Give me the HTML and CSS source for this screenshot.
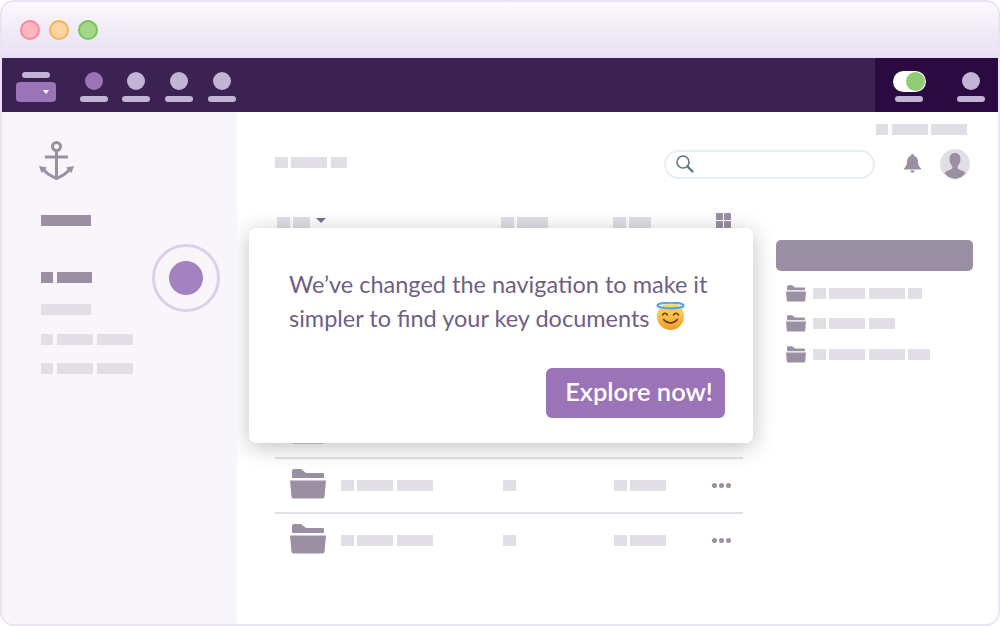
FILE: index.html
```html
<!DOCTYPE html>
<html lang="en">
<head>
    <meta charset="UTF-8">
    <meta name="viewport" content="width=device-width, initial-scale=1.0">
    <title>New navigation</title>
    <link rel="stylesheet" href="styles.css">
</head>
<body>
    <svg class="defs" width="0" height="0">
        <symbol id="folder" viewBox="0 0 36 30">
            <path d="M2 2a2 2 0 0 1 2-2h7l5 4h17a1 1 0 0 1 1 1v4H2z"/>
            <path d="M0 11.5h36l-1.5 16a2 2 0 0 1-2 2h-29a2 2 0 0 1-2-2z"/>
        </symbol>
    </svg>

    <div class="window">
        <div class="titlebar">
            <span class="light red"></span>
            <span class="light yellow"></span>
            <span class="light green"></span>
        </div>

        <nav class="navbar">
            <div class="brand">
                <span class="pill brand-pill"></span>
                <span class="brand-box"><span class="caret"></span></span>
            </div>
            <div class="nav-item active"><span class="dot"></span><span class="pill"></span></div>
            <div class="nav-item"><span class="dot"></span><span class="pill"></span></div>
            <div class="nav-item"><span class="dot"></span><span class="pill"></span></div>
            <div class="nav-item"><span class="dot"></span><span class="pill"></span></div>
            <div class="nav-right">
                <div class="nav-item"><span class="toggle"><span class="knob"></span></span><span class="pill"></span></div>
                <div class="nav-item"><span class="dot"></span><span class="pill"></span></div>
            </div>
        </nav>

        <div class="layout">
            <aside class="sidebar">
                <svg class="anchor" width="35" height="39" viewBox="0 0 35 39">
                    <circle cx="17.5" cy="5.5" r="4" fill="none" stroke="#9a8fa3" stroke-width="3"/>
                    <path d="M17.5 9v28M6 16h23M3.5 27Q7 33 17.5 37.5Q28 33 31.5 27" fill="none" stroke="#9a8fa3" stroke-width="3"/>
                    <path d="M0 25l8 1.500-5.500 5.500zM35 25l-8 1.500 5.500 5.500z" fill="#9a8fa3"/>
                </svg>
                <div class="sk-row side-title"><i class="sk dark w50"></i></div>
                <div class="sk-row side-active"><i class="sk dark w12"></i><i class="sk dark w35"></i></div>
                <div class="sk-row side-a"><i class="sk w50"></i></div>
                <div class="sk-row side-b"><i class="sk w12"></i><i class="sk w36"></i><i class="sk w36"></i></div>
                <div class="sk-row side-c"><i class="sk w12"></i><i class="sk w36"></i><i class="sk w36"></i></div>
                <div class="pulse"><span></span></div>
            </aside>

            <main class="main">
                <div class="sk-row top-links"><i class="sk w13"></i><i class="sk w36"></i><i class="sk w36"></i></div>

                <header class="header">
                    <div class="sk-row crumbs"><i class="sk w13"></i><i class="sk w36"></i><i class="sk w16"></i></div>
                    <div class="search">
                        <svg width="18" height="18" viewBox="0 0 18 18">
                            <circle cx="7" cy="7" r="6" fill="none" stroke="#5f7587" stroke-width="1.600"/>
                            <path d="M11.500 11.500l5 5" stroke="#5f7587" stroke-width="2.400" stroke-linecap="round"/>
                        </svg>
                    </div>
                    <svg class="bell" width="17" height="19" viewBox="0 0 17 19">
                        <path d="M8.500 0a1.500 1.500 0 0 1 1.500 1.700C12.500 2.400 14 4.500 14 7.500c0 3.500 1 5 3 7v1H0v-1c2-2 3-3.500 3-7 0-3 1.500-5.100 4-5.800A1.500 1.500 0 0 1 8.500 0zM6.300 16.500h4.400a2.200 2.200 0 0 1-4.400 0z" fill="#9a8fa3"/>
                    </svg>
                    <svg class="avatar" width="30" height="30" viewBox="0 0 30 30">
                        <circle cx="15" cy="15" r="15" fill="#e1dee6"/>
                        <path d="M15 4c3.500 0 5.500 2.500 5.500 6 0 3-1.200 5.500-2.800 7v2.500c1.500 1.500 6 2 7.800 4.500A15 15 0 0 1 15 30 15 15 0 0 1 4.500 24c1.800-2.500 6.300-3 7.800-4.500V17c-1.600-1.500-2.800-4-2.800-7 0-3.500 2-6 5.500-6z" fill="#9a8fa3"/>
                    </svg>
                </header>

                <div class="content">
                    <section class="table">
                        <div class="table-head">
                            <div class="sk-row"><i class="sk w13"></i><i class="sk w16"></i><span class="sort"></span></div>
                            <div class="sk-row"><i class="sk w13"></i><i class="sk w31"></i></div>
                            <div class="sk-row"><i class="sk w13"></i><i class="sk w22"></i></div>
                            <div class="grid-icon"><i></i><i></i><i></i><i></i></div>
                        </div>
                        <div class="table-row">
                            <div class="name"><svg class="folder"><use href="#folder"/></svg><div class="sk-row"><i class="sk w13"></i><i class="sk w36"></i><i class="sk w36"></i></div></div>
                            <div class="sk-row"><i class="sk w13"></i></div>
                            <div class="sk-row"><i class="sk w13"></i><i class="sk w36"></i></div>
                            <div class="more"><i></i><i></i><i></i></div>
                        </div>
                        <div class="table-row">
                            <div class="name"><svg class="folder"><use href="#folder"/></svg><div class="sk-row"><i class="sk w13"></i><i class="sk w36"></i><i class="sk w36"></i></div></div>
                            <div class="sk-row"><i class="sk w13"></i></div>
                            <div class="sk-row"><i class="sk w13"></i><i class="sk w36"></i></div>
                            <div class="more"><i></i><i></i><i></i></div>
                        </div>
                        <div class="table-row">
                            <div class="name"><svg class="folder"><use href="#folder"/></svg><div class="sk-row"><i class="sk w13"></i><i class="sk w36"></i><i class="sk w36"></i></div></div>
                            <div class="sk-row"><i class="sk w13"></i></div>
                            <div class="sk-row"><i class="sk w13"></i><i class="sk w36"></i></div>
                            <div class="more"><i></i><i></i><i></i></div>
                        </div>
                        <div class="table-row">
                            <div class="name"><svg class="folder"><use href="#folder"/></svg><div class="sk-row"><i class="sk w13"></i><i class="sk w36"></i><i class="sk w36"></i></div></div>
                            <div class="sk-row"><i class="sk w13"></i></div>
                            <div class="sk-row"><i class="sk w13"></i><i class="sk w36"></i></div>
                            <div class="more"><i></i><i></i><i></i></div>
                        </div>
                        <div class="table-row">
                            <div class="name"><svg class="folder"><use href="#folder"/></svg><div class="sk-row"><i class="sk w13"></i><i class="sk w36"></i><i class="sk w36"></i></div></div>
                            <div class="sk-row"><i class="sk w13"></i></div>
                            <div class="sk-row"><i class="sk w13"></i><i class="sk w36"></i></div>
                            <div class="more"><i></i><i></i><i></i></div>
                        </div>
                        <div class="table-row">
                            <div class="name"><svg class="folder"><use href="#folder"/></svg><div class="sk-row"><i class="sk w13"></i><i class="sk w36"></i><i class="sk w36"></i></div></div>
                            <div class="sk-row"><i class="sk w13"></i></div>
                            <div class="sk-row"><i class="sk w13"></i><i class="sk w36"></i></div>
                            <div class="more"><i></i><i></i><i></i></div>
                        </div>
                    </section>

                    <aside class="panel">
                        <div class="panel-btn"></div>
                        <div class="panel-row"><svg class="folder-sm"><use href="#folder"/></svg><div class="sk-row"><i class="sk w13"></i><i class="sk w36"></i><i class="sk w36"></i><i class="sk w14"></i></div></div>
                        <div class="panel-row"><svg class="folder-sm"><use href="#folder"/></svg><div class="sk-row"><i class="sk w13"></i><i class="sk w36"></i><i class="sk w26"></i></div></div>
                        <div class="panel-row"><svg class="folder-sm"><use href="#folder"/></svg><div class="sk-row"><i class="sk w13"></i><i class="sk w36"></i><i class="sk w36"></i><i class="sk w22"></i></div></div>
                    </aside>
                </div>

                <div class="modal">
                    <p>We’ve changed the navigation to make it<br>simpler to find your key documents
                        <svg class="emoji" role="img" aria-label="smiling face with halo" width="29" height="28" viewBox="0 0 29 28">
                            <defs>
                                <linearGradient id="face" x1="0" y1="0" x2="0" y2="1">
                                    <stop offset="0" stop-color="#fde06a"/>
                                    <stop offset="1" stop-color="#f49a26"/>
                                </linearGradient>
                            </defs>
                            <circle cx="14.500" cy="14.500" r="13.500" fill="url(#face)"/>
                            <ellipse cx="14.500" cy="3.500" rx="13" ry="2.800" fill="none" stroke="#5aa6df" stroke-width="2.200"/>
                            <path d="M6.500 13q2.500-3.500 5 0M17.500 13q2.500-3.500 5 0" fill="none" stroke="#5b3a14" stroke-width="1.500" stroke-linecap="round"/>
                            <path d="M7.500 17.500q7 7 14 0" fill="none" stroke="#5b3a14" stroke-width="1.500" stroke-linecap="round"/>
                        </svg>
                    </p>
                    <div class="modal-actions"><button type="button">Explore now!</button></div>
                </div>
            </main>
        </div>
    </div>
</body>
</html>
```

FILE: styles.css
```css
body {
    margin: 0;
    background: #fff;
    font-family: Lato, "Open Sans", sans-serif;
}

.defs {
    position: absolute;
}

.window {
    box-sizing: border-box;
    width: 1000px;
    height: 626px;
    border: 2px solid #ebe3f5;
    border-radius: 14px;
    overflow: hidden;
    display: flex;
    flex-direction: column;
    background: #fff;
}

.titlebar {
    height: 56px;
    display: flex;
    align-items: center;
    gap: 9px;
    padding-left: 18px;
    background: linear-gradient(#faf8fc, #e9dff2);
}

.light {
    box-sizing: border-box;
    width: 20px;
    height: 20px;
    border-radius: 50%;
    border: 2px solid;
}

.red { background: #ffb6c0; border-color: #fb8a96; }
.yellow { background: #fdd5a0; border-color: #f7b155; }
.green { background: #a2d688; border-color: #76c653; }

.navbar {
    height: 54px;
    display: flex;
    background: #3b2253;
    padding-left: 14px;
}

.brand {
    width: 40px;
    margin-right: 24px;
    padding-top: 14px;
    display: flex;
    flex-direction: column;
    align-items: center;
}

.pill {
    display: block;
    width: 28px;
    height: 6px;
    border-radius: 3px;
    background: #c3b3d4;
}

.brand-box {
    width: 40px;
    height: 20px;
    margin-top: 4px;
    border-radius: 4px;
    background: #9b74b7;
    display: flex;
    align-items: center;
    justify-content: flex-end;
    padding-right: 7px;
    box-sizing: border-box;
}

.caret {
    border: 3.5px solid transparent;
    border-top: 4px solid #fff;
    border-bottom: 0;
}

.nav-item {
    width: 28px;
    margin-right: 15px;
    padding-top: 14px;
    display: flex;
    flex-direction: column;
    align-items: center;
    gap: 6px;
}

.dot {
    width: 18px;
    height: 18px;
    border-radius: 50%;
    background: #c3b3d4;
}

.active {
    margin-right: 14px;
}

.active .dot {
    background: #9b74b7;
}

.nav-right {
    margin-left: auto;
    width: 123px;
    background: #2a0a40;
    display: flex;
    padding-left: 20px;
    box-sizing: border-box;
}

.nav-right .nav-item {
    margin-right: 34px;
}

.nav-right .nav-item:last-child {
    margin-right: 0;
}

.toggle {
    box-sizing: border-box;
    flex: none;
    width: 33px;
    height: 21px;
    margin-top: -1px;
    margin-bottom: -2px;
    padding: 1px;
    border-radius: 11px;
    background: #fff;
    display: flex;
    justify-content: flex-end;
}

.knob {
    width: 19px;
    height: 19px;
    border-radius: 50%;
    background: #90cc73;
}

.layout {
    flex: 1;
    display: flex;
    min-height: 0;
}

/* placeholder blocks */
.sk-row {
    display: flex;
    align-items: center;
    gap: 3.5px;
}

.sk {
    display: block;
    height: 11px;
    background: #e1dee6;
}

.sk.dark { background: #9a8fa3; }
.w12 { width: 12px; }
.w13 { width: 12.5px; }
.w14 { width: 14px; }
.w16 { width: 16.5px; }
.w22 { width: 22px; }
.w26 { width: 26px; }
.w31 { width: 31px; }
.w35 { width: 35px; }
.w36 { width: 36px; }
.w50 { width: 50px; }

.sidebar {
    position: relative;
    width: 235px;
    box-sizing: border-box;
    padding: 29px 0 0 37px;
    background: #f8f6fb;
}

.sidebar .sk-row { margin-left: 2px; gap: 4px; }
.anchor { display: block; }
.side-title { margin-top: 35px; }
.side-active { margin-top: 46px; }
.side-a { margin-top: 21px; }
.side-b { margin-top: 19px; }
.side-c { margin-top: 18px; }

.pulse {
    position: absolute;
    left: 150px;
    top: 132px;
    box-sizing: border-box;
    width: 68px;
    height: 68px;
    border: 3px solid #dccfe9;
    border-radius: 50%;
    display: flex;
    align-items: center;
    justify-content: center;
}

.pulse span {
    width: 34px;
    height: 34px;
    border-radius: 50%;
    background: #a382bf;
}

.main {
    position: relative;
    flex: 1;
    box-sizing: border-box;
    padding: 12px 25px 0 38px;
    overflow: hidden;
}

.top-links {
    justify-content: flex-end;
    margin-right: 6px;
}

.header {
    display: flex;
    align-items: center;
    margin-top: 14px;
    height: 30px;
}

.crumbs { width: 389px; margin-top: -3px; }

.search {
    box-sizing: border-box;
    width: 211px;
    height: 29px;
    border: 2px solid #e6eff5;
    border-radius: 15px;
    display: flex;
    align-items: center;
    padding-left: 10px;
    margin-right: 29px;
}

.bell { margin-right: 19px; margin-top: -1px; }

.content {
    display: flex;
    margin-top: 34px;
}

.table { width: 468px; flex: none; }

.table-head {
    display: grid;
    grid-template-columns: 226px 112px 103px 15px;
    align-items: end;
    height: 15px;
    margin-bottom: 9px;
}

.table-head .sk-row:first-child { padding-left: 2px; }

.sort {
    margin-left: 3px;
    margin-bottom: 4px;
    border: 5px solid transparent;
    border-top: 5px solid #7d7089;
    border-bottom: 0;
}

.grid-icon {
    display: grid;
    grid-template-columns: 7px 7px;
    gap: 1px;
}

.grid-icon i {
    height: 7px;
    background: #9a8fa3;
    border-radius: 1px;
}

.table-row {
    box-sizing: border-box;
    height: 55px;
    border-top: 2px solid #e3dfe8;
    padding-bottom: 1px;
    display: grid;
    grid-template-columns: 228px 111px 98px 1fr;
    align-items: center;
}

.name {
    display: flex;
    align-items: center;
    gap: 15px;
    padding-left: 15px;
}

.folder {
    width: 36px;
    height: 30px;
    margin-top: -2px;
    fill: #9a8fa3;
}

.more {
    display: flex;
    gap: 2px;
}

.more i {
    width: 5px;
    height: 5px;
    border-radius: 50%;
    background: #9a8fa3;
}

.panel {
    width: 197px;
    margin: 27px 0 0 33px;
}

.panel-btn {
    height: 31px;
    border-radius: 5px;
    background: #9a8fa3;
    margin-bottom: 7px;
}

.panel-row {
    height: 30px;
    display: flex;
    align-items: center;
    gap: 7px;
    padding-left: 10px;
}

.panel-row:last-child {
    margin-top: 1px;
}

.folder-sm {
    width: 20px;
    height: 17px;
    fill: #9a8fa3;
}

.modal {
    position: absolute;
    left: 12px;
    top: 116px;
    box-sizing: border-box;
    width: 504px;
    height: 215px;
    padding: 39px 28px 25px 40px;
    background: #fff;
    border-radius: 7px;
    box-shadow: 0 4px 22px rgba(0, 0, 0, 0.25);
}

.modal p {
    margin: 0;
    font-size: 23.5px;
    line-height: 34px;
    color: #6f5f85;
    white-space: nowrap;
}

.emoji {
    vertical-align: -3px;
}

.modal-actions {
    display: flex;
    justify-content: flex-end;
    margin-top: 33px;
}

.modal-actions button {
    box-sizing: border-box;
    width: 179px;
    height: 50px;
    border: none;
    border-radius: 6px;
    background: #9b74b7;
    color: #fff;
    font-family: inherit;
    font-size: 25.5px;
    font-weight: 600;
    padding: 0 0 5px 7px;
}
```
